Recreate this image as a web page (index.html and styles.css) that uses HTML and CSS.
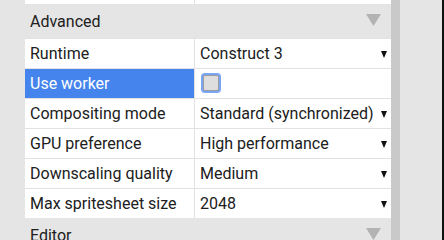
FILE: index.html
```html
<!DOCTYPE html>
<html>
<head>
<meta charset="utf-8">
<link rel="stylesheet" href="styles.css">
</head>
<body>
<div class="frame">
  <div class="gutter"></div>
  <div class="grid">
    <div class="row sliver"><div class="name"></div><div class="value"></div></div>
    <div class="section"><span class="text">Advanced</span><svg class="collapse" width="15" height="12" viewBox="0 0 15 12"><polygon points="0,0 15,0 7.5,12" fill="#b3b3b3"/></svg></div>
    <div class="row"><div class="name">Runtime</div><div class="value"><span class="text">Construct 3</span><svg class="drop" width="6" height="7" viewBox="0 0 6 7"><polygon points="0,0 6,0 3,7" fill="#111"/></svg></div></div>
    <div class="row"><div class="name selected">Use worker</div><div class="value"><span class="check"></span></div></div>
    <div class="row"><div class="name">Compositing mode</div><div class="value"><span class="text">Standard (synchronized)</span><svg class="drop" width="6" height="7" viewBox="0 0 6 7"><polygon points="0,0 6,0 3,7" fill="#111"/></svg></div></div>
    <div class="row"><div class="name">GPU preference</div><div class="value"><span class="text">High performance</span><svg class="drop" width="6" height="7" viewBox="0 0 6 7"><polygon points="0,0 6,0 3,7" fill="#111"/></svg></div></div>
    <div class="row"><div class="name">Downscaling quality</div><div class="value"><span class="text">Medium</span><svg class="drop" width="6" height="7" viewBox="0 0 6 7"><polygon points="0,0 6,0 3,7" fill="#111"/></svg></div></div>
    <div class="row"><div class="name">Max spritesheet size</div><div class="value"><span class="text">2048</span><svg class="drop" width="6" height="7" viewBox="0 0 6 7"><polygon points="0,0 6,0 3,7" fill="#111"/></svg></div></div>
    <div class="section"><span class="text">Editor</span><svg class="collapse" width="15" height="12" viewBox="0 0 15 12"><polygon points="0,0 15,0 7.5,12" fill="#b3b3b3"/></svg></div>
  </div>
  <div class="scrollbar"></div>
  <div class="rest"></div>
  <div class="edge"></div>
</div>
</body>
</html>
```

FILE: styles.css
```css
html, body {
  margin: 0;
  padding: 0;
  background: #e5e5e5;
  overflow: hidden;
}
.frame {
  display: flex;
  width: 444px;
  height: 240px;
  overflow: hidden;
  font-family: Roboto, "Noto Sans", sans-serif;
  font-size: 16px;
  color: #202020;
}
.gutter {
  width: 25px;
  flex: none;
  background: #e5e5e5;
}
.grid {
  width: 366px;
  flex: none;
  display: flex;
  flex-direction: column;
}
.row {
  display: flex;
  height: 29px;
  border-top: 1px solid #e2e2e2;
  background: #fff;
  flex: none;
}
.row.sliver {
  height: 4px;
  border-top: none;
}
.name {
  width: 164px;
  padding-left: 5px;
  border-right: 1px solid #e2e2e2;
  display: flex;
  align-items: center;
  flex: none;
  white-space: nowrap;
}
.name.selected {
  background: #4584ec;
  color: #fff;
}
.value {
  flex: 1;
  display: flex;
  align-items: center;
  padding-left: 5px;
  padding-right: 4px;
  white-space: nowrap;
}
.text {
  flex: 1;
}
.drop {
  flex: none;
  margin-top: 1px;
}
.section {
  height: 34px;
  flex: none;
  background: #e5e5e5;
  display: flex;
  align-items: center;
  padding-left: 5px;
  padding-right: 10px;
}
.collapse {
  flex: none;
  margin-top: -2px;
}
.check {
  flex: none;
  width: 14px;
  height: 14px;
  margin-left: 3px;
  margin-top: -2px;
  background: #dedede;
  border: 1px solid #9c9c9c;
  border-radius: 2px;
  box-shadow: 0 0 0 2px #79a6f2;
}
.scrollbar {
  width: 9px;
  flex: none;
  background: #c9c9c9;
}
.rest {
  flex: 1;
  background: #e5e5e5;
}
.edge {
  width: 2px;
  flex: none;
  background: #111;
}
```
